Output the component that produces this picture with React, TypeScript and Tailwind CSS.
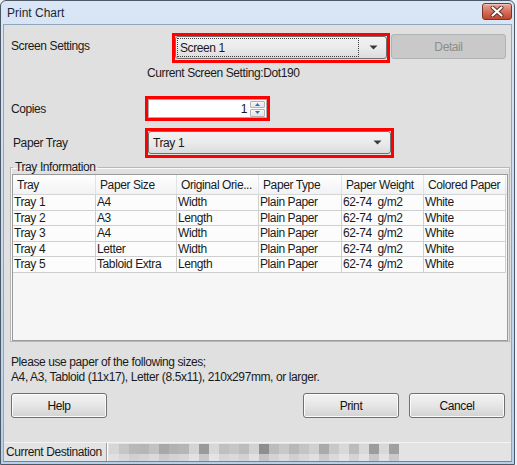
import React from "react";

const rows = [
  ["Tray 1", "A4", "Width", "Plain Paper", "62-74  g/m2", "White"],
  ["Tray 2", "A3", "Length", "Plain Paper", "62-74  g/m2", "White"],
  ["Tray 3", "A4", "Width", "Plain Paper", "62-74  g/m2", "White"],
  ["Tray 4", "Letter", "Width", "Plain Paper", "62-74  g/m2", "White"],
  ["Tray 5", "Tabloid Extra", "Length", "Plain Paper", "62-74  g/m2", "White"],
];
const headers = ["Tray", "Paper Size", "Original Orie...", "Paper Type", "Paper Weight", "Colored Paper"];
const colW = ["w-[83px]", "w-[81px]", "w-[82px]", "w-[83px]", "w-[82px]", "w-[82px]"];

const topBlur = [
  "bg-[#d6d6d6]", "bg-[#c6c6c6]", "bg-[#b8b8b8]", "bg-[#b6b6b6]", "bg-[#c2c2c2]", "bg-[#a8a8a8]",
  "bg-[#b2b2b2]", "bg-[#b6b6b6]", "bg-[#d4d4d4]", "bg-[#9a9a9a]", "bg-[#d8d8d8]", "bg-[#c0c0c0]",
  "bg-[#c6c6c6]", "bg-[#bcbcbc]", "bg-[#d2d2d2]", "bg-[#8e8e8e]", "bg-[#bcbcbc]", "bg-[#c8c8c8]",
  "bg-[#b8b8b8]", "bg-[#c4c4c4]", "bg-[#d0d0d0]", "bg-[#aaaaaa]", "bg-[#c8c8c8]", "bg-[#d8d8d8]",
  "bg-[#bcbcbc]", "bg-[#d8d8d8]", "bg-[#9c9c9c]", "bg-[#d8d8d8]", "bg-[#a0a0a0]",
];
const botBlur = [
  "bg-[#e0e0e0]", "bg-[#d8d8d8]", "bg-[#d0d0d0]", "bg-[#d4d4d4]", "bg-[#dadada]", "bg-[#cccccc]",
  "bg-[#d2d2d2]", "bg-[#d6d6d6]", "bg-[#e2e2e2]", "bg-[#c8c8c8]", "bg-[#e4e4e4]", "bg-[#d6d6d6]",
  "bg-[#dadada]", "bg-[#d2d2d2]", "bg-[#e0e0e0]", "bg-[#c4c4c4]", "bg-[#d4d4d4]", "bg-[#dcdcdc]",
  "bg-[#d0d0d0]", "bg-[#d8d8d8]", "bg-[#e0e0e0]", "bg-[#cccccc]", "bg-[#dadada]", "bg-[#e4e4e4]",
  "bg-[#d4d4d4]", "bg-[#e2e2e2]", "bg-[#c8c8c8]", "bg-[#e2e2e2]", "bg-[#cacaca]",
];

function Arrow() {
  return (
    <svg width="9" height="5" viewBox="0 0 9 5">
      <path d="M0.5 0.5 L8.5 0.5 L4.5 4.5 Z" fill="#3a3a3a" />
    </svg>
  );
}

function Button({ label, disabled }: { label: string; disabled?: boolean }) {
  return (
    <div
      className={
        disabled
          ? "flex h-[25px] w-[115px] items-center justify-center rounded-[3px] border border-[#adb2b5] bg-[#c9c9c9] text-[#8d8d8d]"
          : "flex h-[25px] w-[96px] items-center justify-center rounded-[3px] border border-[#707070] bg-gradient-to-b from-[#f3f3f3] via-[#e6e6e6] to-[#d2d2d2] text-[#111] shadow-[inset_0_0_0_1px_#fbfbfb]"
      }
    >
      {label}
    </div>
  );
}

export default function App() {
  return (
    <div className="h-[465px] w-[517px] bg-[#eef2f6] font-['Liberation_Sans',Arial,sans-serif] text-[12px] tracking-[-0.4px] text-[#1a1a1a]">
      <div className="flex h-[465px] w-[515px] flex-col rounded-t-[6px] border border-[#4c5866] bg-gradient-to-b from-[#d9e6f5] via-[#c8dbf0] to-[#b5d0ec]">
        {/* title bar */}
        <div className="flex h-[23px] items-center justify-between pl-[6px] pr-[2px]">
          <span className="text-[12px] tracking-normal text-[#1b2733]">Print Chart</span>
          <div className="mt-[-2px] flex h-[17px] w-[30px] items-center justify-center rounded-[3px] border border-[#7a3428] bg-gradient-to-b from-[#e8a99c] via-[#d6705e] to-[#c2432c] shadow-[inset_0_1px_0_#f2c4b8]">
            <svg width="14" height="11" viewBox="0 0 14 11">
              <path d="M2.5 1.5 L11.5 9.5 M11.5 1.5 L2.5 9.5" stroke="#5a2a22" strokeWidth="4" strokeLinecap="round" />
              <path d="M2.5 1.5 L11.5 9.5 M11.5 1.5 L2.5 9.5" stroke="#ffffff" strokeWidth="2.2" strokeLinecap="round" />
            </svg>
          </div>
        </div>

        {/* client */}
        <div className="mx-[2px] mb-[2px] flex flex-1 flex-col border border-[#8fa6bd] border-b-[#3a96d2] bg-[#e0e0e0]">
          <div className="flex flex-1 flex-col pl-[7px] pt-[8px]">
            {/* Screen settings */}
            <div className="flex items-start">
              <div className="mt-[4px] w-[161px]">Screen Settings</div>
              <div className="h-[30px] w-[218px] border-[3px] border-[#ff0000]">
                <div className="flex h-[23px] items-center rounded-[3px] border border-[#707070] bg-gradient-to-b from-[#f2f2f2] via-[#ebebeb] to-[#dcdcdc]">
                  <div className="ml-[1px] flex h-[19px] w-[182px] items-center border border-dotted border-[#404040] pl-[2px]">Screen 1</div>
                  <div className="ml-[10px]">
                    <Arrow />
                  </div>
                </div>
              </div>
              <div className="ml-[1px] mt-[1px]">
                <Button label="Detail" disabled />
              </div>
            </div>

            <div className="ml-[136px] mt-[3px] leading-[15px]">Current Screen Setting:Dot190</div>

            {/* Copies */}
            <div className="mt-[15px] flex items-center">
              <div className="w-[134px]">Copies</div>
              <div className="flex h-[25px] w-[125px] items-center border-[3px] border-[#ff0000]">
                <div className="flex h-[19px] w-[119px] items-center border border-[#abadb3] bg-white">
                  <div className="flex-1 pr-[3px] text-right">1</div>
                  <div className="mr-[1px] flex h-[16px] w-[15px] flex-col gap-[1px]">
                    <div className="flex flex-1 items-center justify-center rounded-[1px] border border-[#b3b3b3] bg-gradient-to-b from-[#f7f7f7] to-[#e4e4e4]">
                      <svg width="5" height="3" viewBox="0 0 5 3">
                        <path d="M0 3 L2.5 0 L5 3 Z" fill="#3c6eb4" />
                      </svg>
                    </div>
                    <div className="flex flex-1 items-center justify-center rounded-[1px] border border-[#b3b3b3] bg-gradient-to-b from-[#f7f7f7] to-[#e4e4e4]">
                      <svg width="5" height="3" viewBox="0 0 5 3">
                        <path d="M0 0 L5 0 L2.5 3 Z" fill="#3c6eb4" />
                      </svg>
                    </div>
                  </div>
                </div>
              </div>
            </div>

            {/* Paper tray */}
            <div className="mt-[7px] flex items-center">
              <div className="ml-[2px] w-[132px]">Paper Tray</div>
              <div className="h-[30px] w-[249px] border-[3px] border-[#ff0000]">
                <div className="flex h-[23px] items-center justify-between rounded-[3px] border border-[#707070] bg-gradient-to-b from-[#f2f2f2] via-[#ebebeb] to-[#dcdcdc] pl-[4px] pr-[8px]">
                  <span>Tray 1</span>
                  <Arrow />
                </div>
              </div>
            </div>

            {/* Tray information */}
            <fieldset className="ml-[-1px] mt-[2px] w-[500px] border border-[#b8b8b8] px-[1px] pb-0 shadow-[inset_1px_1px_0_#f8f8f8]">
              <legend className="ml-[1px] px-[2px] leading-[14px]">Tray Information</legend>
              <div className="flex h-[167px] w-[496px] flex-col border border-[#9a9a9a] bg-[#f6f6f6]">
                <div className="flex h-[20px] border-b border-[#d5d5d5] bg-gradient-to-b from-white to-[#f1f2f4]">
                  {headers.map((h, i) => (
                    <div key={h} className={`${colW[i]} flex items-center overflow-hidden whitespace-nowrap border-r border-[#e2e3e5] pl-[4px]`}>
                      {h}
                    </div>
                  ))}
                </div>
                {rows.map((r) => (
                  <div key={r[0]} className="flex h-[15.5px]">
                    {r.map((c, i) => (
                      <div
                        key={i}
                        className={`${colW[i]} flex items-center overflow-hidden whitespace-pre border-b border-r border-[#cfcfcf] bg-[#fcfcfc] pl-[1px] leading-[14px]`}
                      >
                        {c}
                      </div>
                    ))}
                  </div>
                ))}
              </div>
            </fieldset>

            <div className="mt-[13px] leading-[15px]">
              <div>Please use paper of the following sizes;</div>
              <div>A4, A3, Tabloid (11x17), Letter (8.5x11), 210x297mm, or larger.</div>
            </div>

            <div className="mt-[8px] flex w-[494px] items-center">
              <Button label="Help" />
              <div className="ml-auto">
                <Button label="Print" />
              </div>
              <div className="ml-[10px]">
                <Button label="Cancel" />
              </div>
            </div>
          </div>

          {/* status bar */}
          <div className="flex h-[19px] items-stretch border-t border-[#f4f4f4] bg-[#e3e3e3]">
            <div className="flex w-[103px] items-center whitespace-nowrap border-r border-[#a0a0a0] pl-[2px] shadow-[1px_0_0_#ffffff]">
              Current Destination
            </div>
            <div className="ml-[2px] mt-[1px] flex w-[286px] flex-col">
              <div className="flex h-[10px]">
                {topBlur.map((c, i) => (
                  <div key={i} className={`${c} h-[10px] w-[10px] shrink-0`} />
                ))}
              </div>
              <div className="flex h-[7px]">
                {botBlur.map((c, i) => (
                  <div key={i} className={`${c} h-[7px] w-[10px] shrink-0`} />
                ))}
              </div>
            </div>
          </div>
        </div>
      </div>
    </div>
  );
}
